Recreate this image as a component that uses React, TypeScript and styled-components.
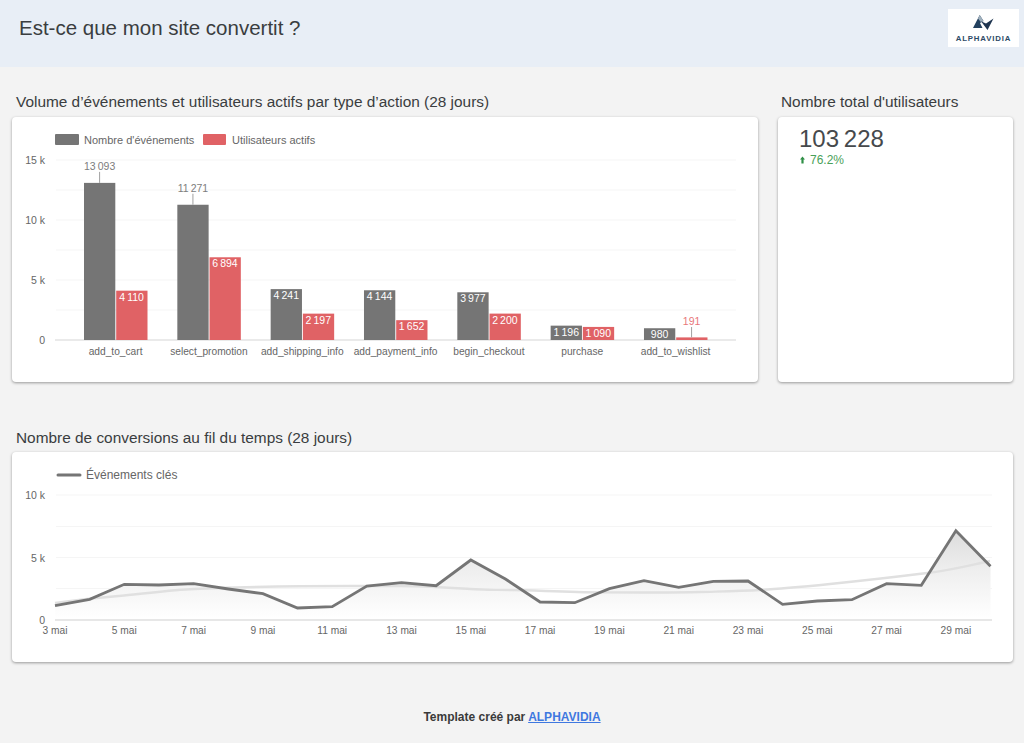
import React from "react";
import styled, { createGlobalStyle } from "styled-components";

const Global = createGlobalStyle`
  html, body { margin: 0; padding: 0; background: #f3f3f3; }
  body { font-family: "Liberation Sans", Arial, sans-serif; color: #3c4043; }
`;

const Page = styled.div`
  width: 1024px;
  height: 743px;
  overflow: hidden;
  display: flex;
  flex-direction: column;
  background: #f3f3f3;
`;

const Header = styled.header`
  height: 67px;
  flex: none;
  background: #e8eef6;
  display: flex;
  align-items: flex-start;
  justify-content: space-between;
  padding: 9px 5px 0 19px;
  box-sizing: border-box;
`;

const Title = styled.h1`
  margin: 6px 0 0;
  font-size: 20.5px;
  line-height: 26px;
  font-weight: 400;
  color: #3a3d40;
`;

const LogoBox = styled.div`
  width: 71px;
  height: 38px;
  background: #fff;
  display: flex;
  flex-direction: column;
  align-items: center;
  padding-top: 5px;
  box-sizing: border-box;
`;

const LogoText = styled.span`
  font-size: 7.8px;
  line-height: 9px;
  font-weight: 700;
  letter-spacing: 0.85px;
  color: #2d4a66;
  margin-top: 3px;
`;

const TopRow = styled.section`
  display: grid;
  grid-template-columns: 746px 235px;
  column-gap: 20px;
  padding: 26px 0 0 12px;
`;

const Column = styled.div`
  display: flex;
  flex-direction: column;
  min-width: 0;
`;

const SectionTitle = styled.h2<{ $indent: number; $gap: number }>`
  margin: 0 0 ${(p) => p.$gap}px ${(p) => p.$indent}px;
  font-size: 15.4px;
  line-height: 18px;
  font-weight: 400;
  color: #3a3d40;
`;

const Card = styled.div<{ $h: number }>`
  height: ${(p) => p.$h}px;
  background: #fff;
  border-radius: 4px;
  box-shadow: 0 1px 3px rgba(0, 0, 0, 0.38);
  box-sizing: border-box;
  position: relative;
`;

const BottomRow = styled.section`
  padding: 47px 11px 0 12px;
`;

const Chart = styled.svg`
  display: block;
  width: 100%;
  height: 100%;
  font-family: "Liberation Sans", Arial, sans-serif;
`;

const ScoreBox = styled.div`
  padding: 8px 0 0 21px;
`;

const Score = styled.div`
  font-size: 24px;
  line-height: 28px;
  color: #46494c;
`;

const Delta = styled.div`
  display: flex;
  align-items: center;
  gap: 5px;
  padding-left: 1px;
  font-size: 12px;
  line-height: 14px;
  color: #4a9f59;
`;

const Footer = styled.footer`
  margin-top: 48px;
  text-align: center;
  font-size: 12px;
  line-height: 14px;
  font-weight: 700;
  color: #3a3a3a;
`;

const FooterLink = styled.a`
  color: #3f78e0;
  text-decoration: underline;
`;

const GRAY = "#757575";
const RED = "#e06265";
const N = "\u202f";

type Bar = { name: string; a: number; b: number; la: string; lb: string };

const bars: Bar[] = [
  { name: "add_to_cart", a: 13093, b: 4110, la: `13${N}093`, lb: `4${N}110` },
  { name: "select_promotion", a: 11271, b: 6894, la: `11${N}271`, lb: `6${N}894` },
  { name: "add_shipping_info", a: 4241, b: 2197, la: `4${N}241`, lb: `2${N}197` },
  { name: "add_payment_info", a: 4144, b: 1652, la: `4${N}144`, lb: `1${N}652` },
  { name: "begin_checkout", a: 3977, b: 2200, la: `3${N}977`, lb: `2${N}200` },
  { name: "purchase", a: 1196, b: 1090, la: `1${N}196`, lb: `1${N}090` },
  { name: "add_to_wishlist", a: 980, b: 191, la: "980", lb: "191" },
];

const BarChart = () => {
  const base = 340;
  const scale = 180 / 15000;
  return (
    <Chart viewBox="12 117 746 265">
      <rect x="55" y="134" width="24" height="11" rx="1" fill={GRAY} />
      <text x="84" y="143.5" fontSize="11" fill="#666">Nombre d'événements</text>
      <rect x="203" y="134" width="23" height="11" rx="1" fill={RED} />
      <text x="232" y="143.5" fontSize="11" fill="#666">Utilisateurs actifs</text>

      {[160, 190, 220, 250, 280, 310].map((y) => (
        <line key={y} x1="56" x2="736" y1={y} y2={y} stroke="#f5f5f5" />
      ))}
      <line x1="55" x2="736" y1="340" y2="340" stroke="#d6d6d6" strokeWidth="1.2" />
      {[["15 k", 160], ["10 k", 220], ["5 k", 280], ["0", 340]].map(([t, y]) => (
        <text key={t} x="45" y={Number(y) + 4} fontSize="10.5" textAnchor="end" fill="#666">{t}</text>
      ))}

      {bars.map((b, i) => {
        const c = 115.6 + 93.33 * i;
        const ha = b.a * scale;
        const hb = Math.max(b.b * scale, 2.6);
        const ya = base - ha;
        const yb = base - hb;
        const tall = i < 2;
        const last = i === 6;
        return (
          <g key={b.name}>
            <rect x={c - 31.6} y={ya} width="31.3" height={ha} fill={GRAY} />
            <rect x={c + 0.6} y={yb} width="31.3" height={hb} fill={RED} />
            {tall ? (
              <>
                <line x1={c - 16} x2={c - 16} y1={ya - 11} y2={ya} stroke="#a0a0a0" />
                <text x={c - 16} y={ya - 13} fontSize="10.5" textAnchor="middle" fill="#7d7d7d">{b.la}</text>
              </>
            ) : (
              <text x={c - 16} y={ya + 10} fontSize="10.5" textAnchor="middle" fill="#fff">{b.la}</text>
            )}
            {last ? (
              <>
                <line x1={c + 16} x2={c + 16} y1={327} y2={yb} stroke="#a0a0a0" />
                <text x={c + 16} y={325} fontSize="10.5" textAnchor="middle" fill="#e8777a">{b.lb}</text>
              </>
            ) : (
              <text x={c + 16} y={yb + 10} fontSize="10.5" textAnchor="middle" fill="#fff">{b.lb}</text>
            )}
            <text x={c} y="354.5" fontSize="10.2" textAnchor="middle" fill="#666">{b.name}</text>
          </g>
        );
      })}
    </Chart>
  );
};

const series = [605.7, 599.3, 584.3, 585, 583.7, 589, 593.7, 608, 606.7, 586, 582.7, 585.7, 560, 579, 602, 602.7, 588.7, 580.7, 587.3, 581.3, 581, 604.3, 601, 599.7, 583.7, 585.3, 530.7, 566.3];
const px = (i: number) => 55 + i * 34.65;
const linePts = series.map((y, i) => `${px(i).toFixed(1)},${y}`).join(" ");
const trendPath = "M55 603 C85 599 105 597 124 595.5 S170 590 194 589 S270 586.5 300 586.3 S370 585.8 400 586 S455 588 470 589 S490 589.7 512 590 S570 592.3 600 592.4 S680 592.6 700 592 S740 591 760 590 S805 586.5 830 584 S895 577 925 573.3 S970 565 990 561";
const days = [3, 5, 7, 9, 11, 13, 15, 17, 19, 21, 23, 25, 27, 29];

const LineChart = () => (
  <Chart viewBox="12 452 1001 210">
    <defs>
      <linearGradient id="area" gradientUnits="userSpaceOnUse" x1="0" y1="530" x2="0" y2="618">
        <stop offset="0" stopColor="#dcdcdc" />
        <stop offset="0.45" stopColor="#eeeeee" />
        <stop offset="1" stopColor="#ffffff" />
      </linearGradient>
    </defs>
    <line x1="58" x2="80" y1="475" y2="475" stroke={GRAY} strokeWidth="3" strokeLinecap="round" />
    <text x="86" y="479" fontSize="12" fill="#666">Événements clés</text>

    {[495, 526.5, 557.5, 588.5].map((y) => (
      <line key={y} x1="56" x2="992" y1={y} y2={y} stroke="#f5f5f5" />
    ))}
    {[["10 k", 495], ["5 k", 557.5], ["0", 620]].map(([t, y]) => (
      <text key={t} x="45" y={Number(y) + 4} fontSize="10.5" textAnchor="end" fill="#666">{t}</text>
    ))}

    <polygon points={`55,620 ${linePts} 990.5,620`} fill="url(#area)" />
    <path d={trendPath} fill="none" stroke="#e0e0e0" strokeWidth="2.4" />
    <line x1="55" x2="992" y1="620" y2="620" stroke="#d0d0d0" strokeWidth="1.2" />
    <polyline points={linePts} fill="none" stroke={GRAY} strokeWidth="2.8" strokeLinejoin="miter" />

    {days.map((d, i) => (
      <text key={d} x={px(i * 2)} y="634" fontSize="10.2" textAnchor="middle" fill="#666">{d} mai</text>
    ))}
  </Chart>
);

const Logo = () => (
  <svg width="21" height="17" viewBox="0 0 21 17" aria-hidden="true">
    <polygon points="0,14 6.7,1 10.5,7 7,9 9.5,14" fill="#24415f" />
    <polygon points="6.7,1 10.5,7 8,8.2 5,4.4" fill="#9fb0bd" />
    <polygon points="8,7.2 13,9.6 20.5,4.5 14.5,16" fill="#1f3550" />
  </svg>
);

const ArrowUp = () => (
  <svg width="5" height="8" viewBox="0 0 5 8" aria-hidden="true">
    <polygon points="2.5,0.5 5,3.5 3.6,3.5 3.6,7.5 1.4,7.5 1.4,3.5 0,3.5" fill="#2f8f46" />
  </svg>
);

export default function App() {
  return (
    <Page>
      <Global />
      <Header>
        <Title>Est-ce que mon site convertit ?</Title>
        <LogoBox>
          <Logo />
          <LogoText>ALPHAVIDIA</LogoText>
        </LogoBox>
      </Header>

      <TopRow>
        <Column>
          <SectionTitle $indent={4} $gap={6}>Volume d’événements et utilisateurs actifs par type d’action (28 jours)</SectionTitle>
          <Card $h={265}>
            <BarChart />
          </Card>
        </Column>
        <Column>
          <SectionTitle $indent={3} $gap={6}>Nombre total d'utilisateurs</SectionTitle>
          <Card $h={265}>
            <ScoreBox>
              <Score>{`103${N}228`}</Score>
              <Delta>
                <ArrowUp />
                76.2%
              </Delta>
            </ScoreBox>
          </Card>
        </Column>
      </TopRow>

      <BottomRow>
        <SectionTitle $indent={4} $gap={5}>Nombre de conversions au fil du temps (28 jours)</SectionTitle>
        <Card $h={210}>
          <LineChart />
        </Card>
      </BottomRow>

      <Footer>
        Template créé par <FooterLink href="#">ALPHAVIDIA</FooterLink>
      </Footer>
    </Page>
  );
}
